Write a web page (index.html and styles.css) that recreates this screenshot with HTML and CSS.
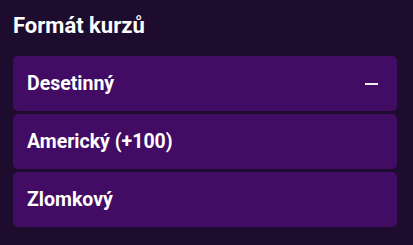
FILE: index.html
```html
<!DOCTYPE html>
<html lang="cs">
<head>
    <meta charset="UTF-8">
    <meta name="viewport" content="width=device-width, initial-scale=1.0">
    <title>Formát kurzů</title>
    <link rel="stylesheet" href="styles.css">
</head>
<body>

    <div class="panel">
        <h2>Formát kurzů</h2>

        <div class="options">
            <div class="option">
                <span>Desetinný</span>
                <span class="minus"></span>
            </div>
            <div class="option">
                <span>Americký (+100)</span>
            </div>
            <div class="option">
                <span>Zlomkový</span>
            </div>
        </div>
    </div>

</body>
</html>
```

FILE: styles.css
```css
* {
    margin: 0;
    padding: 0;
    box-sizing: border-box;
}

body {
    font-family: Roboto, 'Liberation Sans', sans-serif;
    background-color: #1e0c2f;
    width: 413px;
    height: 245px;
    overflow: hidden;
}

.panel {
    padding: 13px 16px 0 13px;
}

h2 {
    font-size: 22px;
    font-weight: 700;
    color: #fff;
    line-height: 26px;
    margin-bottom: 17px;
}

.options {
    display: flex;
    flex-direction: column;
    gap: 3px;
}

.option {
    height: 55px;
    background-color: #420b64;
    border-radius: 5px;
    display: flex;
    align-items: center;
    justify-content: space-between;
    padding: 0 19px 0 14px;
    color: #fff;
    font-size: 19.5px;
    font-weight: 700;
}

.minus {
    width: 13px;
    height: 2px;
    background-color: #eee;
}
```
